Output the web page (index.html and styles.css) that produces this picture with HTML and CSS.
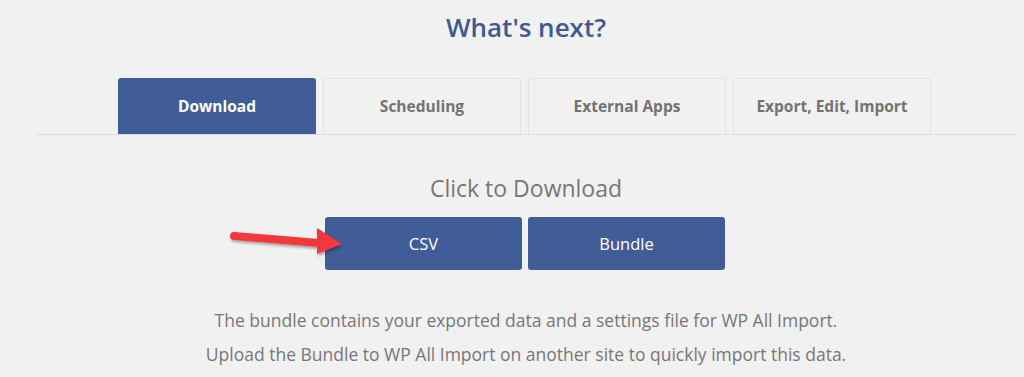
FILE: index.html
```html
<!DOCTYPE html>
<html>
<head>
<meta charset="utf-8">
<link rel="stylesheet" href="styles.css">
</head>
<body>
<div class="wrap">
  <h2 class="title">What's next?</h2>
  <div class="tabs">
    <div class="tab active">Download</div>
    <div class="tab">Scheduling</div>
    <div class="tab">External Apps</div>
    <div class="tab">Export, Edit, Import</div>
  </div>
  <div class="panel">
    <div class="subtitle">Click to Download</div>
    <div class="buttons">
      <div class="btn">CSV</div>
      <div class="btn">Bundle</div>
      <svg class="arrow" width="140" height="50" viewBox="0 0 140 50">
        <defs>
          <filter id="sh" x="-20%" y="-40%" width="140%" height="180%">
            <feDropShadow dx="1" dy="2" stdDeviation="1.5" flood-color="#000" flood-opacity="0.35"/>
          </filter>
        </defs>
        <g filter="url(#sh)" fill="#f2383d" stroke="none">
          <path d="M12 15 L97 22 L97 30 L12 23 Z"/>
          <circle cx="12" cy="19" r="4"/>
          <path d="M95 11 L120 27 L95 37 Z"/>
        </g>
      </svg>
    </div>
    <p class="note">The bundle contains your exported data and a settings file for WP All Import.<br>Upload the Bundle to WP All Import on another site to quickly import this data.</p>
  </div>
</div>
</body>
</html>
```
FILE: styles.css
```css
html, body {
  margin: 0;
  padding: 0;
  background: #f1f1f1;
  font-family: "Open Sans", "Liberation Sans", sans-serif;
}
.wrap {
  margin: 0 8px 0 36px;
  padding-top: 9px;
}
.title {
  margin: 0;
  text-align: center;
  font-size: 26px;
  line-height: 36px;
  font-weight: 600;
  color: #40598f;
}
.tabs {
  margin-top: 33px;
  display: flex;
  justify-content: center;
  gap: 7px;
  border-bottom: 1px solid #dcdcdc;
  padding-right: 3px;
}
.tab {
  width: 198px;
  height: 56px;
  box-sizing: border-box;
  border: 1px solid #e2e2e2;
  border-bottom: none;
  border-radius: 3px 3px 0 0;
  display: flex;
  align-items: center;
  justify-content: center;
  padding-bottom: 2px;
  font-size: 15.5px;
  font-weight: 700;
  color: #737373;
  background: #f1f1f1;
}
.tab.active {
  background: #415d97;
  border-color: #415d97;
  color: #fff;
}
.panel {
  text-align: center;
}
.subtitle {
  margin-top: 38px;
  font-size: 23px;
  line-height: 30px;
  color: #777;
}
.buttons {
  position: relative;
  margin-top: 14px;
  display: flex;
  justify-content: center;
  gap: 6px;
  padding-right: 2px;
}
.btn {
  width: 197px;
  height: 53px;
  background: #415d97;
  border-radius: 3px;
  color: #fff;
  font-size: 16.5px;
  display: flex;
  align-items: center;
  justify-content: center;
}
.arrow {
  position: absolute;
  left: 186px;
  top: 0;
}
.note {
  margin: 33px 0 0;
  font-size: 17.5px;
  line-height: 34px;
  color: #777;
}
```
